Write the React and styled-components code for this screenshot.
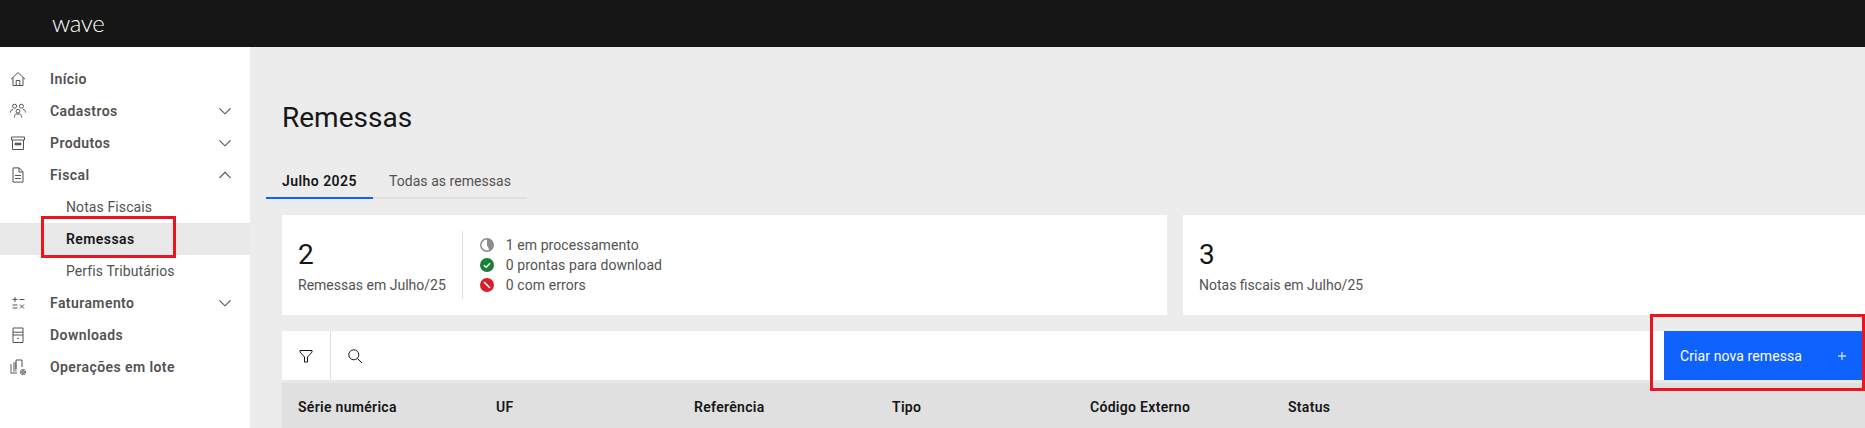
import React from "react";
import styled, { createGlobalStyle } from "styled-components";

const GlobalStyle = createGlobalStyle`
  html, body {
    margin: 0;
    padding: 0;
    height: 100%;
    overflow: hidden;
    background: #ececec;
    font-family: "Roboto", "Liberation Sans", sans-serif;
    font-size: 14px;
    letter-spacing: 0.1px;
  }
  * { box-sizing: border-box; }
`;

const Page = styled.div`
  width: 1865px;
  height: 428px;
  display: flex;
  flex-direction: column;
  overflow: hidden;
`;

const Header = styled.header`
  height: 47px;
  flex: none;
  background: #161616;
  padding-left: 52px;
  display: flex;
  align-items: center;
`;

const Logo = styled.span`
  font-family: "Lato", sans-serif;
  font-weight: 300;
  font-size: 24px;
  letter-spacing: -0.4px;
  color: #fff;
  line-height: 1;
  margin-top: -1px;
`;

const Body = styled.div`
  flex: 1;
  display: flex;
  min-height: 0;
`;

const Sidebar = styled.nav`
  width: 250px;
  flex: none;
  background: #fff;
  padding-top: 16px;
`;

const NavRow = styled.div`
  height: 32px;
  display: flex;
  align-items: center;
  padding-left: 10px;
  padding-right: 17px;
  color: #525252;
  font-weight: 600;
  letter-spacing: 0.42px;
`;

const NavIcon = styled.span`
  width: 16px;
  height: 16px;
  margin-right: 24px;
  display: flex;
`;

const NavLabel = styled.span`
  flex: 1;
`;

const SubRow = styled.div`
  height: 32px;
  display: flex;
  align-items: center;
  padding-left: 66px;
  color: ${p => (p.$active ? "#161616" : "#525252")};
  font-weight: ${p => (p.$active ? 600 : 400)};
  letter-spacing: ${p => (p.$active ? "0.42px" : "0.1px")};
  background: ${p => (p.$active ? "#e8e8e8" : "transparent")};
  position: relative;
`;

const RedMark = styled.span`
  position: absolute;
  border: 3px solid #e8161f;
  pointer-events: none;
  left: ${p => p.$left}px;
  top: ${p => p.$top}px;
  width: ${p => p.$width}px;
  height: ${p => p.$height}px;
`;

const Main = styled.main`
  flex: 1;
  min-width: 0;
  overflow: hidden;
  padding: 0 0 0 32px;
`;

const Title = styled.h1`
  margin: 53px 0 0;
  font-size: 28px;
  line-height: 36px;
  font-weight: 400;
  letter-spacing: 0;
  color: #161616;
`;

const Tabs = styled.div`
  display: flex;
  margin: 29px 0 0 -16px;
`;

const Tab = styled.div`
  height: 34px;
  padding: 0 16px;
  display: flex;
  align-items: center;
  border-bottom: 2px solid ${p => (p.$active ? "#0f62fe" : "#e0e0e0")};
  color: ${p => (p.$active ? "#161616" : "#525252")};
  font-weight: ${p => (p.$active ? 600 : 400)};
  letter-spacing: ${p => (p.$active ? "0.45px" : "0.05px")};
`;

const Cards = styled.div`
  display: flex;
  gap: 16px;
  margin-top: 16px;
`;

const Card = styled.section`
  width: 885px;
  height: 100px;
  flex: none;
  background: #fff;
  padding: 16px;
  display: flex;
  align-items: center;
`;

const Stat = styled.div`
  display: flex;
  flex-direction: column;
  padding-top: 2px;
`;

const StatValue = styled.span`
  font-size: 28px;
  line-height: 36px;
  color: #161616;
  letter-spacing: 0;
`;

const StatLabel = styled.span`
  color: #525252;
  line-height: 20px;
  margin-top: 2px;
  letter-spacing: 0;
`;

const StatusList = styled.ul`
  list-style: none;
  margin: 0 0 0 16px;
  padding: 0 0 0 17px;
  height: 68px;
  border-left: 1px solid #e0e0e0;
  display: flex;
  flex-direction: column;
  justify-content: center;
`;

const StatusItem = styled.li`
  height: 20px;
  display: flex;
  align-items: center;
  gap: 12px;
  color: #525252;
  letter-spacing: 0.08px;
`;

const Toolbar = styled.div`
  margin-top: 16px;
  height: 52px;
  display: flex;
  background: #fff;
  border-bottom: 3px solid #e8e8e8;
  position: relative;
`;

const ToolCell = styled.div`
  width: ${p => p.$width}px;
  display: flex;
  align-items: center;
  justify-content: center;
  border-right: ${p => (p.$divider ? "1px solid #e0e0e0" : "none")};
  flex: none;
`;

const ToolSpacer = styled.div`
  flex: 1;
`;

const PrimaryButton = styled.button`
  width: 201px;
  height: 49px;
  flex: none;
  border: 0;
  margin: 0;
  padding: 0 19px 0 16px;
  background: #0f62fe;
  color: #fff;
  font: inherit;
  letter-spacing: inherit;
  display: flex;
  align-items: center;
  justify-content: space-between;
`;

const TableHead = styled.div`
  height: 48px;
  display: grid;
  grid-template-columns: repeat(6, 198px) 1fr;
  background: #e0e0e0;
  align-items: center;
`;

const HeadCell = styled.span`
  padding-left: 16px;
  font-weight: 600;
  color: #161616;
  letter-spacing: 0.3px;
`;

const Svg = ({ children, size = 16, view = 16, stroke = "#525252", width = 1 }) => (
  <svg
    width={size}
    height={size}
    viewBox={`0 0 ${view} ${view}`}
    fill="none"
    stroke={stroke}
    strokeWidth={width}
  >
    {children}
  </svg>
);

const HomeIcon = () => (
  <Svg>
    <path d="M1 8.200 8 1.600l7 6.600M3 6.600V14.500h10V6.600" />
    <path d="M6.200 14.500V9.500h3.600v5" />
  </Svg>
);

const PeopleIcon = () => (
  <Svg>
    <circle cx="4.600" cy="3.200" r="2" />
    <circle cx="11.400" cy="3.200" r="2" />
    <circle cx="8" cy="8.200" r="1.900" />
    <path d="M.5 9.500c0-2 1-3 2.500-3M15.500 9.500c0-2-1-3-2.500-3M4.500 14.500v-1c0-1.600 1-2.500 2-2.500h3c1 0 2 .9 2 2.500v1" />
  </Svg>
);

const BoxIcon = () => (
  <Svg>
    <path d="M1.500 2h13v3h-13zM2.500 5v9.500h11V5" />
    <path d="M5 8.200h6v1.600H5z" fill="#525252" />
  </Svg>
);

const DocIcon = () => (
  <Svg>
    <path d="M3 .9h6.200L13 4.800v10.300H3zM9 1v4h4" />
    <path d="M5 8.500h6M5 11.500h6" />
  </Svg>
);

const CalcIcon = () => (
  <Svg>
    <path d="M2.500 4.500h5M5 2v5M9.500 4.500h5M2.500 10h5M2.500 13h5M10 9.500l4 4M14 9.500l-4 4" />
  </Svg>
);

const DrawerIcon = () => (
  <Svg>
    <path d="M3 1h10v14.500H3zM3 5.200h10M3 8h10" />
    <circle cx="8" cy="11.500" r=".8" fill="#525252" stroke="none" />
  </Svg>
);

const BatchIcon = () => (
  <Svg>
    <path d="M3 3v9.500h3.500V3.500z" fill="#a8a8a8" stroke="none" />
    <path d="M1 5v9h6" stroke="#8d8d8d" strokeWidth="1.400" />
    <path d="M6 10V1h6v7" />
    <circle cx="13" cy="13" r="1.300" />
    <circle cx="13" cy="13" r="2.500" strokeDasharray="1.300 .66" strokeWidth="1.200" />
  </Svg>
);

const Chevron = ({ up }) => (
  <Svg width={1.15}>
    <path d={up ? "M2.500 10.800 8 5.300l5.500 5.500" : "M2.500 5.300 8 10.800l5.500-5.500"} />
  </Svg>
);

const FilterIcon = () => (
  <Svg stroke="#161616">
    <path d="M2 2.500h12v1.600L9.500 9v5h-3V9L2 4.100z" />
  </Svg>
);

const SearchIcon = () => (
  <Svg stroke="#161616">
    <circle cx="6.800" cy="6.800" r="5" />
    <path d="m10.500 10.500 4.500 4.500" />
  </Svg>
);

const PlusIcon = () => (
  <Svg size={8} view={8} stroke="#c4d6ff" width={1.300}>
    <path d="M4 0v8M0 4h8" />
  </Svg>
);

const ProgressIcon = () => (
  <Svg size={14} view={14} stroke="none">
    <circle cx="7" cy="7" r="6.200" fill="#fff" stroke="#8d8d8d" strokeWidth="1.500" />
    <path d="M7 7V.8A6.200 6.200 0 0 1 9.500 12.700z" fill="#8d8d8d" />
  </Svg>
);

const DoneIcon = () => (
  <Svg size={14} view={14} stroke="none">
    <circle cx="7" cy="7" r="7" fill="#198038" />
    <path d="m3.900 7.200 2.200 2.100 4-4" stroke="#fff" strokeWidth="1.500" />
  </Svg>
);

const ErrorIcon = () => (
  <Svg size={14} view={14} stroke="none">
    <circle cx="7" cy="7" r="7" fill="#da1e28" />
    <path d="m4 4 6 6" stroke="#fff" strokeWidth="1.600" />
  </Svg>
);

const topItems = [
  { label: "Início", icon: <HomeIcon /> },
  { label: "Cadastros", icon: <PeopleIcon />, chevron: "down" },
  { label: "Produtos", icon: <BoxIcon />, chevron: "down" },
  { label: "Fiscal", icon: <DocIcon />, chevron: "up" },
];

const bottomItems = [
  { label: "Faturamento", icon: <CalcIcon />, chevron: "down" },
  { label: "Downloads", icon: <DrawerIcon /> },
  { label: "Operações em lote", icon: <BatchIcon /> },
];

const columns = ["Série numérica", "UF", "Referência", "Tipo", "Código Externo", "Status"];

const NavItem = ({ item }) => (
  <NavRow>
    <NavIcon>{item.icon}</NavIcon>
    <NavLabel>{item.label}</NavLabel>
    {item.chevron && <Chevron up={item.chevron === "up"} />}
  </NavRow>
);

const App = () => (
  <Page>
    <GlobalStyle />
    <Header>
      <Logo>wave</Logo>
    </Header>
    <Body>
      <Sidebar>
        {topItems.map(item => (
          <NavItem key={item.label} item={item} />
        ))}
        <SubRow>Notas Fiscais</SubRow>
        <SubRow $active>
          Remessas
          <RedMark $left={41} $top={-7} $width={135} $height={42} />
        </SubRow>
        <SubRow>Perfis Tributários</SubRow>
        {bottomItems.map(item => (
          <NavItem key={item.label} item={item} />
        ))}
      </Sidebar>
      <Main>
        <Title>Remessas</Title>
        <Tabs>
          <Tab $active>Julho 2025</Tab>
          <Tab>Todas as remessas</Tab>
        </Tabs>
        <Cards>
          <Card>
            <Stat>
              <StatValue>2</StatValue>
              <StatLabel>Remessas em Julho/25</StatLabel>
            </Stat>
            <StatusList>
              <StatusItem>
                <ProgressIcon />1 em processamento
              </StatusItem>
              <StatusItem>
                <DoneIcon />0 prontas para download
              </StatusItem>
              <StatusItem>
                <ErrorIcon />0 com errors
              </StatusItem>
            </StatusList>
          </Card>
          <Card>
            <Stat>
              <StatValue>3</StatValue>
              <StatLabel>Notas fiscais em Julho/25</StatLabel>
            </Stat>
          </Card>
        </Cards>
        <Toolbar>
          <ToolCell $width={49} $divider>
            <FilterIcon />
          </ToolCell>
          <ToolCell $width={48}>
            <SearchIcon />
          </ToolCell>
          <ToolSpacer />
          <PrimaryButton>
            Criar nova remessa
            <PlusIcon />
          </PrimaryButton>
          <RedMark $left={1368} $top={-17} $width={215} $height={77} />
        </Toolbar>
        <TableHead>
          {columns.map(col => (
            <HeadCell key={col}>{col}</HeadCell>
          ))}
        </TableHead>
      </Main>
    </Body>
  </Page>
);

export default App;
